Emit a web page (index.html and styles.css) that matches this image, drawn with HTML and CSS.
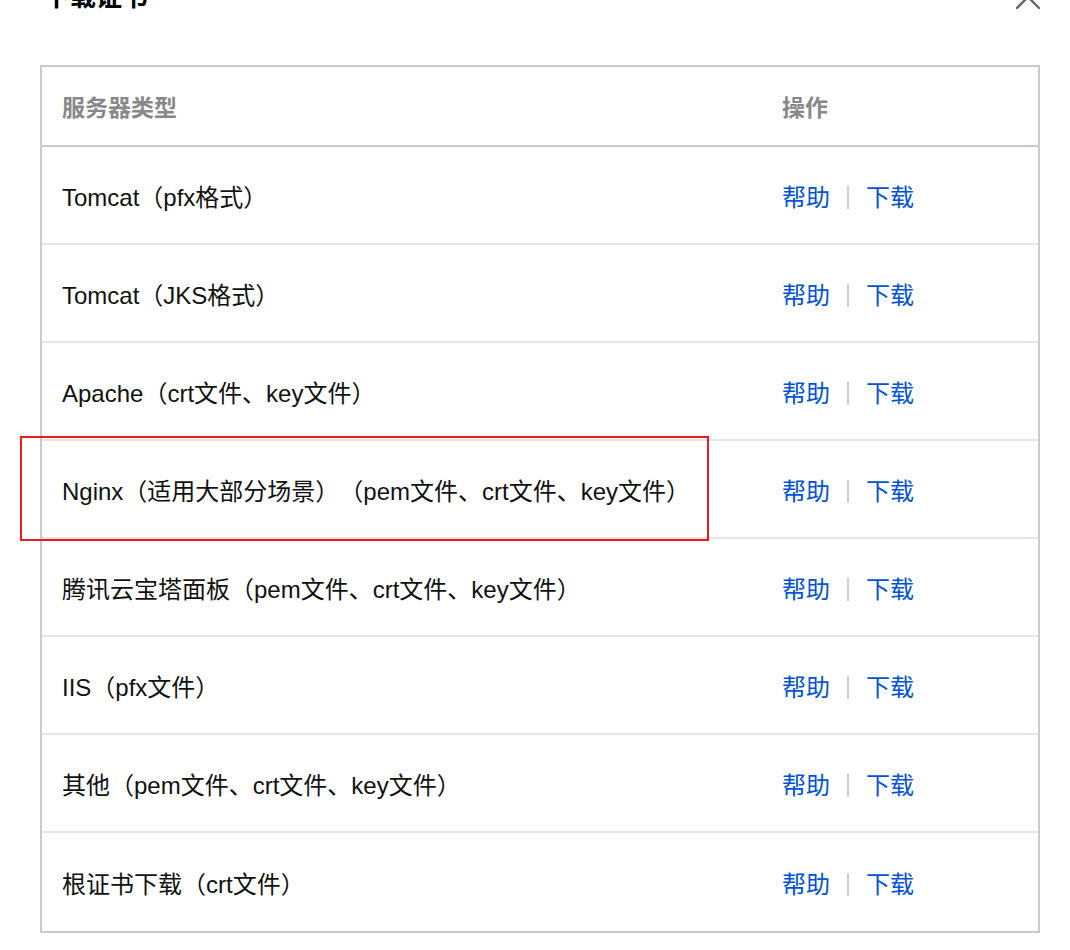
FILE: index.html
```html
<!DOCTYPE html>
<html lang="zh-CN">
<head>
<meta charset="utf-8">
<title>下载证书</title>
<link rel="stylesheet" href="styles.css">
</head>
<body>
<div class="dialog">
  <div class="dialog-head">
    <div class="title">下载证书</div>
    <div class="close">
      <svg width="24" height="24" viewBox="0 0 24 24"><path d="M1 1 L23 23 M23 1 L1 23" stroke="#666" stroke-width="2.4" fill="none" stroke-linecap="square"/></svg>
    </div>
  </div>
  <div class="table">
    <div class="row head-row">
      <div class="cell">服务器类型</div>
      <div class="cell">操作</div>
    </div>
    <div class="row">
      <div class="cell">Tomcat（pfx格式）</div>
      <div class="cell ops"><a class="link">帮助</a><span class="sep"></span><a class="link">下载</a></div>
    </div>
    <div class="row">
      <div class="cell">Tomcat（JKS格式）</div>
      <div class="cell ops"><a class="link">帮助</a><span class="sep"></span><a class="link">下载</a></div>
    </div>
    <div class="row">
      <div class="cell">Apache（crt文件、key文件）</div>
      <div class="cell ops"><a class="link">帮助</a><span class="sep"></span><a class="link">下载</a></div>
    </div>
    <div class="row marked">
      <div class="cell">Nginx（适用大部分场景）（pem文件、crt文件、key文件）</div>
      <div class="cell ops"><a class="link">帮助</a><span class="sep"></span><a class="link">下载</a></div>
      <div class="highlight"></div>
    </div>
    <div class="row">
      <div class="cell">腾讯云宝塔面板（pem文件、crt文件、key文件）</div>
      <div class="cell ops"><a class="link">帮助</a><span class="sep"></span><a class="link">下载</a></div>
    </div>
    <div class="row">
      <div class="cell">IIS（pfx文件）</div>
      <div class="cell ops"><a class="link">帮助</a><span class="sep"></span><a class="link">下载</a></div>
    </div>
    <div class="row">
      <div class="cell">其他（pem文件、crt文件、key文件）</div>
      <div class="cell ops"><a class="link">帮助</a><span class="sep"></span><a class="link">下载</a></div>
    </div>
    <div class="row">
      <div class="cell">根证书下载（crt文件）</div>
      <div class="cell ops"><a class="link">帮助</a><span class="sep"></span><a class="link">下载</a></div>
    </div>
  </div>
</div>
</body>
</html>
```

FILE: styles.css
```css
html, body {
  margin: 0;
  padding: 0;
  background: #fff;
  overflow: hidden;
}
body {
  font-family: "Liberation Sans", "Noto Sans CJK SC", sans-serif;
  color: #111;
  text-spacing-trim: space-all;
}
.dialog {
  padding: 0 30px 0 40px;
}
.dialog-head {
  display: flex;
  justify-content: space-between;
  align-items: center;
  height: 26px;
  margin-top: -16px;
}
.title {
  font-size: 26px;
  line-height: 26px;
  font-weight: 700;
  color: #000;
  margin-left: 4px;
}
.close {
  width: 24px;
  height: 24px;
}
.close svg {
  display: block;
}
.table {
  margin-top: 55px;
  border: 2px solid #c8cbd6;
}
.row {
  display: grid;
  grid-template-columns: 720px 1fr;
  height: 91px;
  padding-top: 5px;
  align-items: center;
  border-bottom: 2px solid #e3e5ea;
  font-size: 24px;
  line-height: 28px;
  box-sizing: content-box;
  position: relative;
}
.row:last-child {
  border-bottom: none;
  height: 93px;
}
.head-row {
  height: 75px;
  padding-top: 3px;
  border-bottom: 2px solid #c8cbd6;
  color: #888;
  font-weight: 700;
  font-size: 23px;
}
.cell {
  padding-left: 20px;
  white-space: nowrap;
}
.ops {
  display: flex;
  align-items: center;
}
.link {
  color: #0052d9;
  cursor: pointer;
}
.sep {
  display: inline-block;
  width: 2px;
  height: 23px;
  background: #cfcfcf;
  margin: 0 17px;
}
.highlight {
  position: absolute;
  top: -5px;
  left: -22px;
  width: 689px;
  height: 105px;
  border: 2px solid #ee1c1c;
  box-sizing: border-box;
  pointer-events: none;
}
```
